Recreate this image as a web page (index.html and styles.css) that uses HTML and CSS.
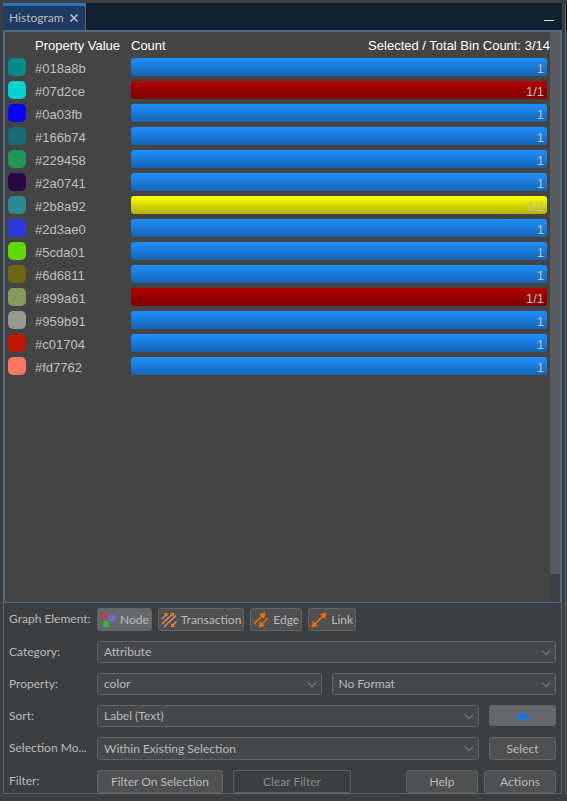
FILE: index.html
```html
<!DOCTYPE html>
<html lang="en">
<head>
<meta charset="utf-8">
<title>Histogram</title>
<link rel="stylesheet" href="styles.css">
</head>
<body>
<main class="window">
  <header class="tabs">
    <div class="tab">
      <span>Histogram</span>
      <button class="close" type="button" aria-label="Close"><svg width="8" height="8" viewBox="0 0 8 8"><path d="M.5 .5l7 7M7.500 .5l-7 7"/></svg></button>
    </div>
    <button class="minimise" type="button" aria-label="Minimise"></button>
  </header>

  <section class="list">
    <table class="histogram">
      <thead>
        <tr><th class="c-swatch"></th><th class="c-value">Property Value</th><th><div class="count-head"><span>Count</span><span>Selected / Total Bin Count: 3/14</span></div></th></tr>
      </thead>
      <tbody id="bins"></tbody>
    </table>
    <div class="scroll"><div class="thumb"></div></div>
  </section>

  <form class="options">
    <div class="row tall">
      <span class="name">Graph Element:</span>
      <div class="toggles">
        <button type="button" class="toggle on" aria-pressed="true"><svg width="16" height="16" viewBox="0 0 16 16"><circle cx="4" cy="4" r="3.200" fill="#b84545"/><circle cx="12" cy="6" r="3.200" fill="#6b6bdc"/><circle cx="6" cy="12" r="3.200" fill="#3fae46"/></svg>Node</button>
        <button type="button" class="toggle" aria-pressed="false"><svg width="16" height="16" viewBox="0 0 16 16"><g stroke="#f7965a" stroke-width="1.100" fill="none"><path d="M1 7L6 2M1 12L12 1.500M3 15L15 3.500M11 14L15.500 9.500"/></g><path fill="#ff7415" d="M6.500 1v4l-4-4zM13 1v4l-4-4zM10 15v-4l4 4z"/></svg>Transaction</button>
        <button type="button" class="toggle" aria-pressed="false"><svg width="16" height="16" viewBox="0 0 16 16"><g stroke="#ff6a00" stroke-width="1.500"><path d="M1 12L10 3M15 6L8 13"/></g><path fill="#ff6a00" d="M12.500 .5l-1.500 6.500-5-5zM5.500 15.500l1.500-6.500 5 5z"/></svg>Edge</button>
        <button type="button" class="toggle" aria-pressed="false"><svg width="16" height="16" viewBox="0 0 16 16"><path stroke="#ff6a00" stroke-width="1.500" d="M3 13L13 3"/><path fill="#ff6a00" d="M15.500 .5l-1.500 6.500-5-5zM.5 15.500l1.500-6.500 5 5z"/></svg>Link</button>
      </div>
    </div>
    <div class="row">
      <label class="name" for="category">Category:</label>
      <div class="combo"><select id="category"><option>Attribute</option></select><svg width="10" height="6" viewBox="0 0 10 6"><path d="M1 .5l4 4 4-4"/></svg></div>
    </div>
    <div class="row">
      <label class="name" for="property">Property:</label>
      <div class="combo"><select id="property"><option>color</option></select><svg width="10" height="6" viewBox="0 0 10 6"><path d="M1 .5l4 4 4-4"/></svg></div>
      <div class="combo"><select aria-label="Format"><option>No Format</option></select><svg width="10" height="6" viewBox="0 0 10 6"><path d="M1 .5l4 4 4-4"/></svg></div>
    </div>
    <div class="row">
      <label class="name" for="sort">Sort:</label>
      <div class="combo"><select id="sort"><option>Label (Text)</option></select><svg width="10" height="6" viewBox="0 0 10 6"><path d="M1 .5l4 4 4-4"/></svg></div>
      <button type="button" class="side order" aria-label="Ascending"><svg width="14" height="7" viewBox="0 0 14 7"><path d="M7 0l7 7H0z"/></svg></button>
    </div>
    <div class="row tall">
      <label class="name" for="mode">Selection Mo...</label>
      <div class="combo"><select id="mode"><option>Within Existing Selection</option></select><svg width="10" height="6" viewBox="0 0 10 6"><path d="M1 .5l4 4 4-4"/></svg></div>
      <button type="button" class="side">Select</button>
    </div>
    <div class="row tall">
      <span class="name">Filter:</span>
      <div class="filters">
        <button type="button" class="wide">Filter On Selection</button>
        <button type="button" class="clear" disabled>Clear Filter</button>
        <div class="end"><button type="button">Help</button><button type="button">Actions</button></div>
      </div>
    </div>
  </form>
</main>
<aside class="neighbour"></aside>
<script src="bins.js"></script>
</body>
</html>
```
FILE: styles.css
```css
* { box-sizing: border-box; }

body {
  margin: 0;
  min-height: 100vh;
  padding: 3px 0 7px 3px;
  display: flex;
  gap: 3px;
  background: #3c3f41;
  color: #bbbbbb;
  font: 12px/16px Lato, "Open Sans", sans-serif;
}

button, select { font: inherit; color: inherit; margin: 0; }

.window {
  flex: 1;
  min-width: 0;
  display: flex;
  flex-direction: column;
  border: 1px solid #646464;
  border-top: 0;
}

.neighbour {
  width: 2px;
  border-left: 1px solid #646464;
  background: linear-gradient(#000 27px, #3c3f41 27px);
}

/* Tab strip */
.tabs {
  display: flex;
  justify-content: space-between;
  height: 28px;
  margin: 0 -1px;
  background: #112130;
  border-bottom: 1px solid #646464;
}
.tab {
  display: flex;
  align-items: center;
  gap: 6px;
  padding: 0 7px 0 6px;
  background: #1f3a63;
  border-top: 3px solid #2675bf;
  border-right: 1px solid #646464;
}
.close { display: flex; padding: 0; border: 0; background: none; }
.close path { stroke: #c4c8cc; stroke-width: 1.500; }
.minimise {
  align-self: center;
  width: 10px;
  height: 8px;
  margin: 0 8px 0 0;
  padding: 0;
  border: 0;
  border-bottom: 1px solid #e0e0e0;
  background: none;
}

/* Histogram */
.list {
  flex: 1;
  display: flex;
  align-items: stretch;
  background: #444444;
  border: 1px solid #436ea8;
}
.histogram {
  flex: 1;
  align-self: flex-start;
  table-layout: fixed;
  width: 100%;
  border-collapse: collapse;
  font: 13px/18px "Liberation Sans", Arial, sans-serif;
  color: #c0c0c0;
}
.histogram th {
  height: 24px;
  padding: 4px 0 0;
  font-weight: normal;
  text-align: left;
  color: #ffffff;
  white-space: nowrap;
}
.histogram td { height: 23px; padding: 2px 0 3px; vertical-align: top; }
.histogram .c-swatch { width: 30px; }
.histogram .c-value { width: 96px; }
.count-head { display: flex; justify-content: space-between; }
.swatch { display: block; width: 18px; height: 18px; margin-left: 3px; border-radius: 5px; }
.label { display: block; line-height: 22px; height: 18px; }
.bar {
  height: 18px;
  margin-right: 3px;
  padding-right: 3px;
  border-radius: 3px;
  line-height: 22px;
  text-align: right;
  background: linear-gradient(#1e90ff, #1564b2);
}
.bar.selected { background: linear-gradient(#b40000, #7d0000); }
.bar.active { background: linear-gradient(#ffff00, #b2b200); }
.scroll { flex: none; width: 10px; background: #3f4244; }
.thumb { height: 95%; background: #585c5e; }

/* Options */
.options { display: grid; gap: 10px; padding: 5px 5px 0; }
.row { display: flex; gap: 10px; height: 22px; }
.row.tall { height: 23px; }
.name {
  flex: none;
  width: 88px;
  margin-right: -10px;
  line-height: 22px;
  white-space: nowrap;
}
.combo { position: relative; flex: 1; display: flex; }
.combo select {
  appearance: none;
  width: 100%;
  padding: 0 24px 0 6px;
  border: 1px solid #646464;
  border-radius: 3px;
  background: #45494b;
}
.combo svg {
  position: absolute;
  right: 5px;
  top: 9px;
  fill: none;
  stroke: #9a9da0;
  pointer-events: none;
}
.options button {
  padding: 0;
  border: 1px solid #646464;
  border-radius: 3px;
  background: #4e5052;
}
.options .side { width: 67px; }
.options .order {
  height: 21px;
  display: flex;
  align-items: center;
  justify-content: center;
  border-color: #65696b;
  background: #65696b;
}
.order path { fill: #0078ff; }
.toggles { display: flex; gap: 6px; }
.options .toggle { display: flex; align-items: center; gap: 4px; padding: 0 2px; }
.options .toggle.on { background: #65696b; }
.filters { flex: 1; display: flex; gap: 10px; }
.options .wide { width: 126px; }
.options .clear { width: 118px; color: #8c8c8c; background: #3c3f41; }
.end { display: flex; gap: 6px; margin-left: auto; }
.end button { width: 72px; }
```
FILE: bins.js
```js
const bins = [
  ["#018a8b", "1", ""],
  ["#07d2ce", "1/1", "selected"],
  ["#0a03fb", "1", ""],
  ["#166b74", "1", ""],
  ["#229458", "1", ""],
  ["#2a0741", "1", ""],
  ["#2b8a92", "1/1", "active"],
  ["#2d3ae0", "1", ""],
  ["#5cda01", "1", ""],
  ["#6d6811", "1", ""],
  ["#899a61", "1/1", "selected"],
  ["#959b91", "1", ""],
  ["#c01704", "1", ""],
  ["#fd7762", "1", ""]
];

document.getElementById("bins").innerHTML = bins.map(([color, count, state]) => `
  <tr>
    <td><span class="swatch" style="background:${color}"></span></td>
    <td><span class="label">${color}</span></td>
    <td><div class="bar ${state}">${count}</div></td>
  </tr>`).join("");
```
